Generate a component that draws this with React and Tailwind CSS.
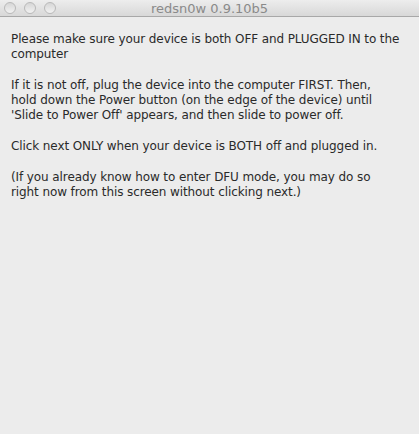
export default function App() {
  const paragraphs = [
    ["Please make sure your device is both OFF and PLUGGED IN to the", "computer"],
    [
      "If it is not off, plug the device into the computer FIRST. Then,",
      "hold down the Power button (on the edge of the device) until",
      "'Slide to Power Off' appears, and then slide to power off.",
    ],
    ["Click next ONLY when your device is BOTH off and plugged in."],
    [
      "(If you already know how to enter DFU mode, you may do so",
      "right now from this screen without clicking next.)",
    ],
  ];

  return (
    <div className="h-[434px] w-[419px] overflow-hidden bg-[#ececec] font-['DejaVu_Sans',sans-serif]">
      <div className="relative flex h-[17px] items-center border-b border-[#a8a8a8] bg-gradient-to-b from-[#ededed] to-[#d8d8d8]">
        <div className="absolute left-[4px] top-[2px] flex gap-[8px]">
          {[0, 1, 2].map((i) => (
            <span
              key={i}
              className="h-[12px] w-[12px] rounded-full border border-[#b9b9b9] bg-gradient-to-b from-[#d6d6d6] to-[#f2f2f2]"
            />
          ))}
        </div>
        <div className="w-full text-center text-[13px] leading-none text-[#8a8a8a]">redsn0w 0.9.10b5</div>
      </div>

      <div className="flex flex-col gap-[16px] px-[11px] pt-[15px] text-[12px] leading-[15px] tracking-[-0.1px] text-[#2a2a2a]">
        {paragraphs.map((lines, i) => (
          <p key={i} className="whitespace-nowrap">
            {lines.map((line, j) => (
              <span key={j} className="block">
                {line}
              </span>
            ))}
          </p>
        ))}
      </div>
    </div>
  );
}
